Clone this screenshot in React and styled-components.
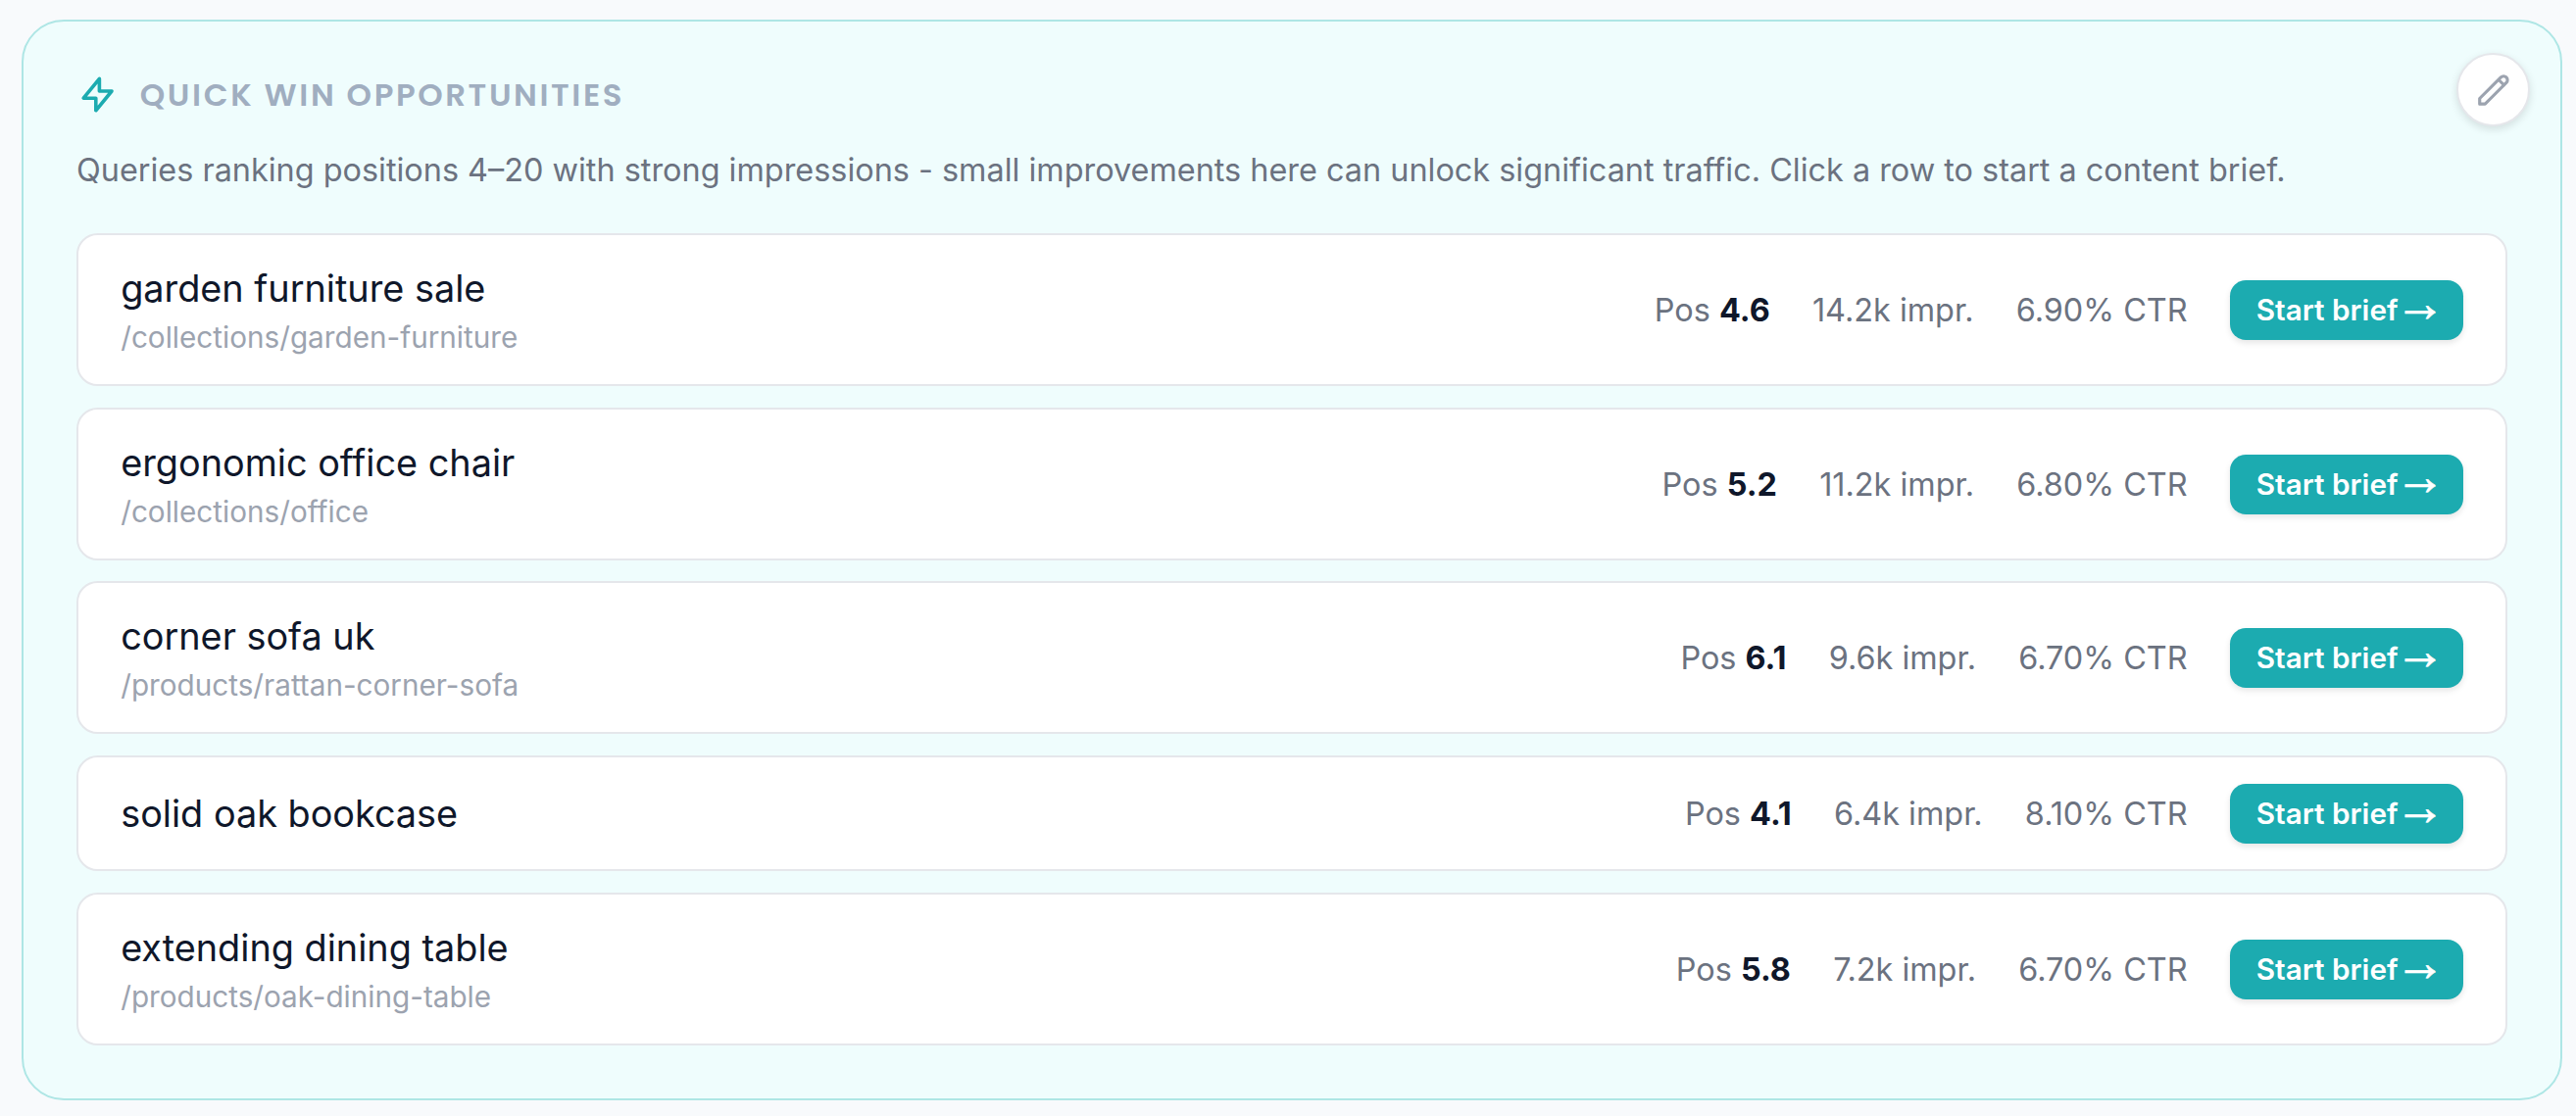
import React from "react";
import styled, { createGlobalStyle } from "styled-components";

const GlobalStyle = createGlobalStyle`
  * {
    box-sizing: border-box;
  }
  body {
    margin: 0;
    background: #f8fafc;
    font-family: Inter, "Liberation Sans", sans-serif;
  }
`;

const Page = styled.main`
  padding: 20px 14px 16px 22px;
  height: 1139px;
`;

const Card = styled.section`
  position: relative;
  height: 1103px;
  padding: 53px 54px;
  background: #effdfd;
  border: 2px solid #aee6e5;
  border-radius: 43.2px;
`;

const Header = styled.header`
  display: flex;
  align-items: center;
  height: 44px;
  gap: 21.6px;
  color: #1cabb0;
`;

const Title = styled.h2`
  margin: 0;
  color: #a0aec0;
  font-family: Poppins, Lato, sans-serif;
  font-size: 32.4px;
  font-weight: 600;
  line-height: 44px;
  letter-spacing: 2.6px;
  text-transform: uppercase;
`;

const Intro = styled.p`
  margin: 29px 0 38px;
  color: #6b7280;
  font-size: 32.4px;
  line-height: 52px;
  white-space: nowrap;
`;

const EditButton = styled.button`
  position: absolute;
  top: 32px;
  right: 31px;
  display: flex;
  align-items: center;
  justify-content: center;
  width: 75px;
  height: 75px;
  padding: 0;
  color: #9ca3af;
  background: #fff;
  border: 2px solid #e5e7eb;
  border-radius: 50%;
  box-shadow: 0 3px 8px rgba(0, 0, 0, 0.12);
`;

const List = styled.div`
  display: flex;
  flex-direction: column;
  gap: 21.6px;
`;

const Row = styled.div`
  display: flex;
  align-items: center;
  gap: 43.2px;
  height: ${(props) => (props.$short ? "118.4px" : "156px")};
  padding: 0 43.2px;
  background: #fff;
  border: 2px solid #e5e7eb;
  border-radius: 21.6px;
`;

const Query = styled.div`
  flex: 1;
  color: #0f172a;
  font-size: 37.8px;
  line-height: 56px;
`;

const Path = styled.div`
  color: #9ca3af;
  font-size: 29.7px;
  line-height: 44px;
`;

const Stat = styled.span`
  padding-top: 1px;
  color: #6b7280;
  font-size: 32.4px;
  white-space: nowrap;

  strong {
    color: #0f172a;
    font-weight: 700;
  }
`;

const BriefButton = styled.button`
  display: flex;
  align-items: center;
  justify-content: center;
  width: 238px;
  height: 61px;
  margin-top: 1px;
  padding: 0 0 1px;
  color: #fff;
  background: #1cabb0;
  border: 0;
  border-radius: 16.2px;
  box-shadow: 0 3px 6px rgba(0, 0, 0, 0.1);
  font-family: inherit;
  font-size: 29.7px;
  font-weight: 600;
  white-space: pre;
`;

const Arrow = styled.span`
  margin-left: -2px;
  padding-top: 3px;
  font-family: "Noto Sans Math", Inter, sans-serif;
  font-size: 33.5px;
  line-height: 1;
  -webkit-text-stroke: 0.6px currentColor;
`;

const queries = [
  { query: "garden furniture sale", path: "/collections/garden-furniture", pos: "4.6", impr: "14.2k", ctr: "6.90%" },
  { query: "ergonomic office chair", path: "/collections/office", pos: "5.2", impr: "11.2k", ctr: "6.80%" },
  { query: "corner sofa uk", path: "/products/rattan-corner-sofa", pos: "6.1", impr: "9.6k", ctr: "6.70%" },
  { query: "solid oak bookcase", pos: "4.1", impr: "6.4k", ctr: "8.10%" },
  { query: "extending dining table", path: "/products/oak-dining-table", pos: "5.8", impr: "7.2k", ctr: "6.70%" },
];

function BoltIcon() {
  return (
    <svg width="43.2" height="43.2" viewBox="0 0 24 24" fill="none" stroke="currentColor" strokeWidth="2" strokeLinecap="round" strokeLinejoin="round">
      <path d="M13 10V3L4 14h7v7l9-11h-7z" />
    </svg>
  );
}

function PencilIcon() {
  return (
    <svg width="37.8" height="37.8" viewBox="0 0 24 24" fill="none" stroke="currentColor" strokeWidth="2" strokeLinecap="round" strokeLinejoin="round">
      <path d="M15.232 5.232l3.536 3.536m-2.036-5.036a2.5 2.5 0 113.536 3.536L6.5 21.036H3v-3.572L16.732 3.732z" />
    </svg>
  );
}

export default function App() {
  return (
    <Page>
      <GlobalStyle />
      <Card>
        <Header>
          <BoltIcon />
          <Title>Quick win opportunities</Title>
        </Header>
        <EditButton aria-label="Edit">
          <PencilIcon />
        </EditButton>
        <Intro>
          Queries ranking positions 4–20 with strong impressions - small
          improvements here can unlock significant traffic. Click a row to start
          a content brief.
        </Intro>
        <List>
          {queries.map((item) => (
            <Row key={item.query} $short={!item.path}>
              <Query>
                {item.query}
                {item.path && <Path>{item.path}</Path>}
              </Query>
              <Stat>
                Pos <strong>{item.pos}</strong>
              </Stat>
              <Stat>{item.impr} impr.</Stat>
              <Stat>{item.ctr} CTR</Stat>
              <BriefButton>
                {"Start brief "}
                <Arrow>→</Arrow>
              </BriefButton>
            </Row>
          ))}
        </List>
      </Card>
    </Page>
  );
}
